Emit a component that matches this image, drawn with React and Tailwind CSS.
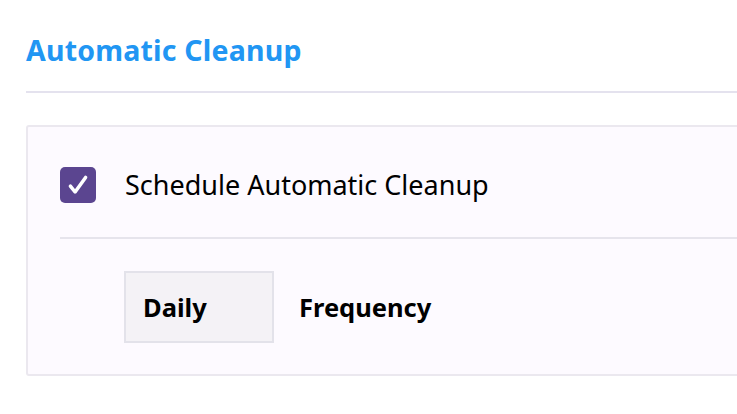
import React, { useState } from "react";

const App = () => {
    const [checked, setChecked] = useState(true);

    return (
        <div className="w-[737px] h-[414px] overflow-hidden bg-white font-['Noto_Sans',sans-serif]">
            <div className="w-[800px] pl-[26px]">
                <h2 className="pt-[30px] h-[91px] text-[28.5px] leading-[40px] font-bold tracking-[0.2px] text-[#2196f3]">
                    Automatic Cleanup
                </h2>
                <div className="h-[2px] bg-[#e4e2ee]" />
                <div className="mt-[32px] border-2 border-[#ebe8ef] rounded-[3px] bg-[#fdfaff] pl-[32px] pt-[40px] h-[251px]">
                    <div className="flex items-center h-[36px]">
                        <button
                            className="w-[36px] h-[36px] rounded-[5px] bg-[#5b4590] flex items-center justify-center"
                            onClick={() => setChecked(!checked)}
                        >
                            {checked && (
                                <svg width="28" height="28" viewBox="0 0 24 24" fill="none">
                                    <path
                                        d="M5.5 13l4 5L18.5 5.5"
                                        stroke="white"
                                        strokeWidth="3"
                                        strokeLinecap="round"
                                        strokeLinejoin="round"
                                    />
                                </svg>
                            )}
                        </button>
                        <span className="ml-[29px] text-[27px] text-black">
                            Schedule Automatic Cleanup
                        </span>
                    </div>
                    <div className="mt-[34px] h-[2px] bg-[#e6e4ec]" />
                    <div className="flex items-center mt-[32px] ml-[64px]">
                        <div className="w-[150px] h-[72px] border-2 border-[#e3e2ea] bg-[#f4f2f6] flex items-center pl-[17px] text-[25.5px] font-bold text-black">
                            Daily
                        </div>
                        <span className="ml-[25px] text-[25.5px] font-bold text-black">
                            Frequency
                        </span>
                    </div>
                </div>
            </div>
        </div>
    );
};

export default App;
